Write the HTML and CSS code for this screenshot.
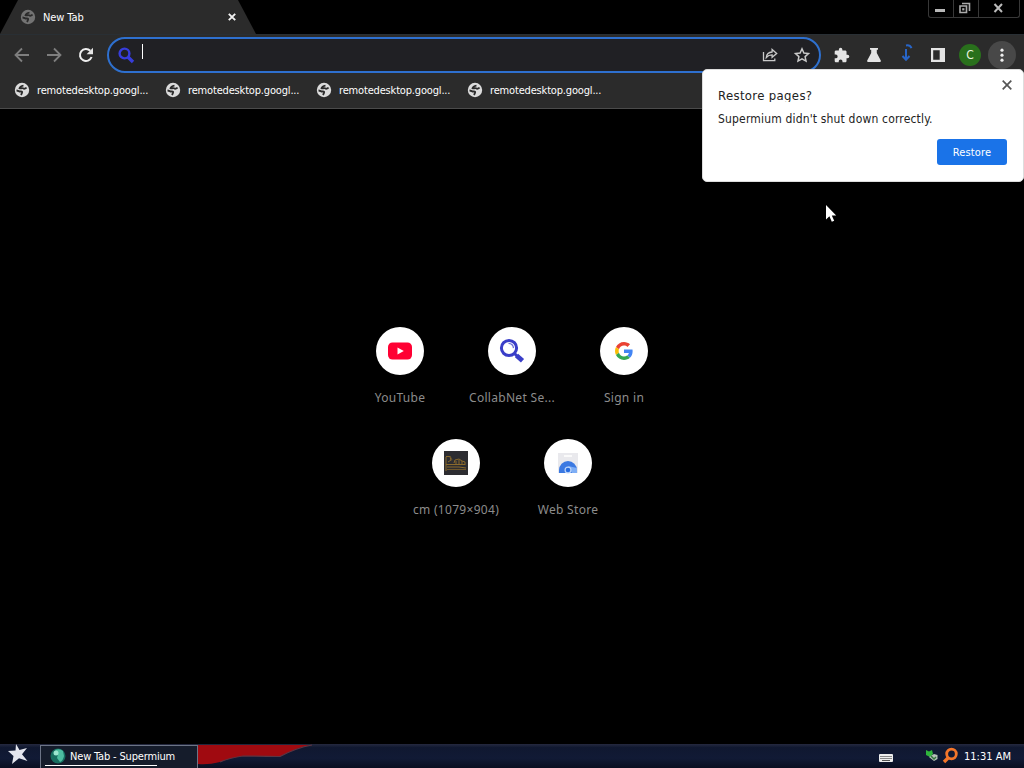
FILE: index.html
```html
<!DOCTYPE html>
<html lang="en">
<head>
    <meta charset="UTF-8">
    <meta name="viewport" content="width=device-width, initial-scale=1.0">
    <title>New Tab - Supermium</title>
    <link rel="stylesheet" href="styles.css">
</head>
<body>
    <!-- Shared globe icon -->
    <svg class="defs" width="0" height="0">
        <symbol id="globe" viewBox="0 0 16 16">
            <circle cx="8" cy="8" r="7.2" fill="currentColor"/>
            <path d="M2.5 8.5c2 0 2.5 1.2 4 1 1.5-.2 2 .3 1.5 1.5L7 13M12.500 5.500c-1 1.500-2.500 1.500-3.500.8-1-.7-2.500.5-3.500 0 .5-1.800 2-2.300 4-2.800" fill="none" stroke="#2b2b2b" stroke-width="1.8"/>
        </symbol>
    </svg>

    <div id="browser">
        <div id="tab-strip">
            <div class="tab">
                <svg class="globe dim"><use href="#globe"/></svg>
                <span class="tab-title">New Tab</span>
                <svg class="tab-close" viewBox="0 0 8 8"><path d="M.8.8l6.4 6.4M7.2.8L.8 7.2" stroke="#f2f2f2" stroke-width="1.9"/></svg>
            </div>
            <div class="window-buttons">
                <span class="win-min"><svg width="24" height="16"><path d="M6 9h10v3H6z" fill="#b8b8b8"/></svg></span>
                <span class="win-max"><svg width="24" height="16"><path d="M8 3.500h7.500V11M6 6h6.500v6.500H6z" fill="none" stroke="#aaa" stroke-width="1.6"/><path d="M8.200 8.200h2.200v2.200H8.200z" fill="#aaa"/></svg></span>
                <span class="win-close"><svg width="41" height="16"><path d="M15.500 4l7.500 8M23 4l-7.500 8" stroke="#bbb" stroke-width="2"/></svg></span>
            </div>
        </div>

        <div id="toolbar">
            <div class="tool"><svg viewBox="0 0 16 16" class="nav off"><path d="M15 8H2M8 1.5L1.500 8 8 14.500"/></svg></div>
            <div class="tool"><svg viewBox="0 0 16 16" class="nav off"><path d="M1 8h13M8 1.5L14.500 8 8 14.500"/></svg></div>
            <div class="tool"><svg viewBox="0 0 16 16" class="nav"><path d="M13.6 10A6 6 0 1 1 12.300 3.800"/><path d="M15 .8v6.400H8.600z" class="solid"/></svg></div>
            <div id="omnibox">
                <svg class="search" viewBox="0 0 16 16"><circle cx="6.500" cy="6.500" r="4.900" fill="none" stroke="#373ddb" stroke-width="2.4"/><path d="M10 10l5 5" stroke="#373ddb" stroke-width="3.4"/></svg>
                <span class="caret"></span>
                <div class="omnibox-actions">
                    <svg viewBox="0 0 16 16"><path d="M1.500 5v8.700h11.300V11.500"/><path d="M4.300 10.500c.4-3.600 2.400-5.300 5.800-5.500V2.500L14.700 6.400l-4.600 3.900V7.900c-2.500 0-4.300.8-5.800 2.600z"/></svg>
                    <svg viewBox="0 0 16 16"><path d="M8 1.800l1.900 4.200 4.600.5-3.400 3.100.9 4.500L8 11.800l-4 2.300.9-4.500L1.500 6.500 6.100 6z" stroke-width="1.5"/></svg>
                </div>
            </div>
            <div class="tools-right">
                <div class="tool"><svg viewBox="1 0 23 23" class="fill"><path d="M20.500 11H19V7c0-1.100-.9-2-2-2h-4V3.500a2.500 2.500 0 0 0-5 0V5H4c-1.100 0-2 .9-2 2v3.800h1.500a2.700 2.700 0 0 1 0 5.400H2V20c0 1.100.9 2 2 2h3.800v-1.500a2.700 2.700 0 0 1 5.400 0V22H17c1.100 0 2-.9 2-2v-4h1.500a2.500 2.500 0 0 0 0-5z"/></svg></div>
                <div class="tool"><svg viewBox="0 0 16 16" class="fill"><path d="M4 1h8v1.700h-1.200V6l4 7.500q.5 1.300-.8 1.500H2q-1.300-.2-.8-1.500l4-7.500V2.700H4z"/></svg></div>
                <div class="tool"><svg viewBox="0 0 16 16" class="download"><path d="M8 2v10.500M4.500 9L8 12.800 11.500 9"/><path d="M8-1.500q4-.8 5.500 2.700"/></svg></div>
                <div class="tool"><svg viewBox="0 0 16 16" class="fill"><path fill-rule="evenodd" d="M1 1h14v14H1zM3.200 3.200v9.600h6.500V3.200z"/></svg></div>
                <div class="tool"><span class="avatar">C</span></div>
                <div class="tool"><span class="menu"><svg viewBox="0 0 16 16"><circle cx="8" cy="3.200" r="1.600"/><circle cx="8" cy="8.200" r="1.600"/><circle cx="8" cy="13.200" r="1.600"/></svg></span></div>
            </div>
        </div>

        <div id="bookmarks">
            <div class="bookmark"><svg class="globe"><use href="#globe"/></svg><span>remotedesktop.googl...</span></div>
            <div class="bookmark"><svg class="globe"><use href="#globe"/></svg><span>remotedesktop.googl...</span></div>
            <div class="bookmark"><svg class="globe"><use href="#globe"/></svg><span>remotedesktop.googl...</span></div>
            <div class="bookmark"><svg class="globe"><use href="#globe"/></svg><span>remotedesktop.googl...</span></div>
        </div>

        <div id="page">
            <div class="tile-row">
                <div class="tile">
                    <div class="tile-icon"><svg width="24" height="24" viewBox="0 0 24 24"><rect y="3.500" width="24" height="17" rx="4.500" fill="#ff0033"/><path d="M9.500 8.600v6.800l6.300-3.400z" fill="#fff"/></svg></div>
                    <span>YouTube</span>
                </div>
                <div class="tile">
                    <div class="tile-icon"><svg width="24" height="24" viewBox="0 0 24 24"><circle cx="9" cy="9" r="7.600" fill="none" stroke="#3a3ec8" stroke-width="3"/><path d="M8.500 4.300q4.700.2 5 4.800" fill="none" stroke="#6c70d8" stroke-width="1.3"/><path d="M14 14l4 4" stroke="#3a3ec8" stroke-width="3"/><path d="M16.500 16.500l6 5.200" stroke="#3a3ec8" stroke-width="4.8"/></svg></div>
                    <span>CollabNet Se...</span>
                </div>
                <div class="tile">
                    <div class="tile-icon"><svg width="18" height="18" viewBox="0 0 48 48"><path fill="#ea4335" d="M24 9.500c3.540 0 6.710 1.220 9.210 3.600l6.850-6.850C35.900 2.380 30.470 0 24 0 14.620 0 6.510 5.380 2.560 13.220l7.980 6.190C12.430 13.720 17.740 9.500 24 9.500z"/><path fill="#4285f4" d="M46.980 24.550c0-1.570-.15-3.090-.38-4.550H24v9.020h12.940c-.58 2.960-2.260 5.480-4.780 7.180l7.730 6c4.510-4.180 7.090-10.360 7.090-17.650z"/><path fill="#fbbc05" d="M10.530 28.590c-.48-1.450-.76-2.990-.76-4.590s.27-3.140.76-4.590l-7.980-6.190C.92 16.460 0 20.120 0 24s.92 7.540 2.560 10.780z"/><path fill="#34a853" d="M24 48c6.480 0 11.930-2.130 15.890-5.810l-7.730-6c-2.150 1.450-4.920 2.300-8.160 2.300-6.260 0-11.570-4.220-13.470-9.910l-7.980 6.190C6.510 42.620 14.620 48 24 48z"/></svg></div>
                    <span>Sign in</span>
                </div>
            </div>
            <div class="tile-row">
                <div class="tile">
                    <div class="tile-icon"><svg width="24" height="24" viewBox="0 0 24 24"><path fill="#2d2d31" d="M0 0h24v24H0z"/><path d="M2 20V6M2 5.500h4l1 4M4 11l3-2M10 12l1-3 4-1 3 2 3 1v3M12 10v3M15 9v4M18 10v3M2 13.500h19M3 16h12l7 1" fill="none" stroke="#8a6a2c"/><path d="M6 5l2 4M3 18.500h19" stroke="#6e562b"/></svg></div>
                    <span>cm (1079×904)</span>
                </div>
                <div class="tile">
                    <div class="tile-icon"><svg width="24" height="24" viewBox="0 0 24 24"><path fill="#e9e9ed" d="M2 2h20v20H2z"/><path d="M8 5h8" stroke="#fafafa" stroke-width="2"/><path fill="#3b79e2" d="M3 22v-3a9 9 0 0 1 18 0v3z"/><path fill="#7eaef5" d="M12 15l9 2v5h-5z"/><circle cx="12" cy="19" r="3.500" fill="#bcd5fb"/><circle cx="12" cy="19" r="2.300" fill="#266be0"/></svg></div>
                    <span>Web Store</span>
                </div>
            </div>
        </div>
    </div>

    <div id="taskbar">
        <div class="start"><svg viewBox="0 0 20 20"><path d="M8 0l3.500 6L19 4l-5 6.200L19.500 17 11 14.300 4 20l1.500-8L0 7l7.500-.5z" fill="#e4e6ee"/></svg></div>
        <div class="task">
            <svg viewBox="0 0 16 16"><circle cx="8" cy="8" r="7.500" fill="#176e61"/><path d="M5 2q5-2 8 1l1 5q-1 5-4 6l-3-4 1-4z" fill="#4dbda0"/><circle cx="6" cy="5" r="2.500" fill="#9be6d0"/></svg>
            <span>New Tab - Supermium</span>
        </div>
        <svg class="ribbon" viewBox="0 0 114 21"><path d="M0 1h112Q98 4 82 12.500 64 12 45 12q-14 2-23 6-12 3-22 2z" fill="#a00a10"/><path d="M22 18q9-4 23-6 19 0 37 .5Q98 4 114 1" fill="none" stroke="#5d3543" stroke-width="1.2"/></svg>
        <div class="tray">
            <svg class="keyboard" viewBox="0 0 14 8"><rect width="14" height="8" rx="1" fill="#eee"/><path d="M1.500 2.500h11M1.500 4.500h11" stroke="#222" stroke-dasharray="1 1"/><path d="M3 6.500h8" stroke="#555"/></svg>
            <svg class="plug" viewBox="0 0 14 14"><path d="M1 1l3 1.500L7 1l1 4-3 3-4-2z" fill="#2fb53c"/><path d="M4 8l5 4 3.500-2V6L9 5z" fill="#b5c2b7"/><path d="M6 7l3 3 2-2" fill="none" stroke="#35723d" stroke-width="1.5"/></svg>
            <svg class="finder" viewBox="0 0 16 16"><circle cx="9.500" cy="6" r="4.800" fill="none" stroke="#f4762a" stroke-width="2.8"/><path d="M6.500 9.500L2 14" stroke="#f4762a" stroke-width="3.4"/></svg>
            <span class="clock">11:31 AM</span>
        </div>
    </div>

    <!-- Session restore bubble -->
    <div id="restore-bubble">
        <svg class="bubble-close" viewBox="0 0 10 10"><path d="M.7.7l8.600 8.600M9.300.7L.7 9.300" stroke="#555" stroke-width="1.7"/></svg>
        <h2>Restore pages?</h2>
        <p>Supermium didn't shut down correctly.</p>
        <button>Restore</button>
    </div>

    <svg id="cursor" viewBox="0 0 12 19"><path d="M1 0v14.500l3.400-3.200 2.400 5.400 2.400-1-2.400-5.300h4.400z" fill="#fff"/></svg>
</body>
</html>
```
FILE: styles.css
```css
* {
    margin: 0;
    padding: 0;
    box-sizing: border-box;
}
body {
    position: relative;
    display: flex;
    flex-direction: column;
    width: 1024px;
    height: 768px;
    overflow: hidden;
    background-color: #000;
    color: #fff;
    font-family: Tahoma, 'DejaVu Sans Condensed', 'DejaVu Sans', sans-serif;
    font-size: 11px;
    white-space: nowrap;
}
svg {
    display: block;
    flex-shrink: 0;
    overflow: visible;
}
.defs {
    position: absolute;
}
#browser {
    flex: 1;
    display: flex;
    flex-direction: column;
}

/* Tab strip */
#tab-strip {
    display: flex;
    justify-content: space-between;
    align-items: flex-start;
    height: 34px;
    padding-right: 4px;
}
.tab {
    display: flex;
    align-items: center;
    width: 256px;
    height: 34px;
    padding: 0 20px;
    background-color: #2b2b2b;
    clip-path: polygon(18px 0, 238px 0, 256px 100%, 0 100%);
}
.globe {
    width: 16px;
    height: 16px;
    color: #dcdcdc;
}
.globe.dim {
    color: #737373;
}
.tab-title {
    margin-left: 7px;
    letter-spacing: -0.1px;
}
.tab-close {
    width: 8px;
    height: 8px;
    margin-left: auto;
}
.window-buttons {
    display: flex;
    width: 92px;
    height: 18px;
    border: 1px solid #383838;
    border-top: none;
    border-radius: 0 0 3px 3px;
}
.win-min, .win-max {
    width: 25px;
    border-right: 1px solid #383838;
}

/* Toolbar */
#toolbar {
    display: flex;
    align-items: center;
    height: 40px;
    padding: 0 6px;
    background-color: #2b2b2b;
    border-top: 1px solid #292f34;
}
.tool {
    display: flex;
    justify-content: center;
    align-items: center;
    width: 32px;
    height: 32px;
}
.tool svg {
    width: 16px;
    height: 16px;
}
.nav {
    fill: none;
    stroke: #eee;
    stroke-width: 2;
}
.nav.off {
    stroke: #7e7e7e;
    stroke-width: 1.8;
}
.nav .solid, .fill {
    fill: #e4e4e4;
    stroke: none;
}
.tool .download {
    fill: none;
    stroke: #2865c7;
    stroke-width: 2;
}
#omnibox {
    display: flex;
    align-items: center;
    width: 714px;
    height: 36px;
    margin-left: 5px;
    padding: 0 9px;
    background-color: #202024;
    border: 2px solid #2e70cf;
    border-radius: 18px;
}
.search {
    width: 16px;
    height: 16px;
}
.caret {
    width: 1px;
    height: 15px;
    margin: 0 0 7px 8px;
    background-color: #fff;
}
.omnibox-actions {
    display: flex;
    gap: 16px;
    margin-left: auto;
}
.omnibox-actions svg {
    width: 16px;
    height: 16px;
    fill: none;
    stroke: #c9c9c9;
    stroke-width: 1.3;
}
.tools-right {
    display: flex;
    margin-left: 5px;
}
.avatar {
    width: 22px;
    height: 22px;
    border-radius: 50%;
    background-color: #29701c;
    color: #e7f3df;
    font-size: 12px;
    line-height: 22px;
    text-align: center;
}
.menu {
    display: flex;
    justify-content: center;
    align-items: center;
    width: 28px;
    height: 28px;
    border-radius: 50%;
    background-color: #484848;
    fill: #eee;
}

/* Bookmarks */
#bookmarks {
    display: flex;
    align-items: center;
    height: 35px;
    padding: 0 14px 2px;
    background-color: #2b2b2b;
    border-bottom: 1px solid #4b4b4b;
}
.bookmark {
    display: flex;
    align-items: center;
    gap: 7px;
    width: 151px;
    letter-spacing: -0.17px;
}

/* Shortcuts on the new tab page */
#page {
    flex: 1;
    padding-top: 218px;
}
.tile-row {
    display: flex;
    justify-content: center;
    height: 112px;
}
.tile {
    display: flex;
    flex-direction: column;
    align-items: center;
    width: 112px;
    color: #8c8c8c;
    font-family: 'Noto Sans', 'Open Sans', sans-serif;
    font-size: 12px;
    letter-spacing: 0.3px;
    line-height: 18px;
}
.tile-icon {
    display: flex;
    justify-content: center;
    align-items: center;
    width: 48px;
    height: 48px;
    margin-bottom: 14px;
    border-radius: 50%;
    background-color: #fff;
}

/* Restore bubble */
#restore-bubble {
    position: absolute;
    top: 69px;
    left: 702px;
    display: flex;
    flex-direction: column;
    width: 322px;
    height: 113px;
    padding: 18px 16px 0 15px;
    background-color: #fff;
    border: 1px solid #ddd;
    border-radius: 5px;
    color: #222;
}
#restore-bubble h2 {
    height: 14px;
    overflow: hidden;
    font-size: 13px;
    font-weight: normal;
    letter-spacing: 0.35px;
    line-height: 16px;
}
#restore-bubble p {
    height: 13px;
    margin-top: 9px;
    font-size: 12px;
    letter-spacing: 0.17px;
    line-height: 16px;
}
#restore-bubble button {
    align-self: flex-end;
    width: 70px;
    height: 26px;
    margin-top: 15px;
    border: none;
    border-radius: 3px;
    background-color: #1a73e8;
    color: #fff;
    font-family: inherit;
    font-size: 11px;
    letter-spacing: 0.15px;
}
.bubble-close {
    position: absolute;
    top: 10px;
    right: 11px;
    width: 10px;
    height: 10px;
}
#cursor {
    position: absolute;
    top: 205px;
    left: 825px;
    width: 12px;
    height: 19px;
}

/* Taskbar */
#taskbar {
    display: flex;
    height: 24px;
    background: linear-gradient(#25293f, #101830 15%, #111a35 60%, #090e20);
}
.start {
    width: 40px;
    padding-left: 8px;
}
.start svg {
    width: 20px;
    height: 20px;
}
.task {
    display: flex;
    align-items: center;
    gap: 4px;
    width: 158px;
    margin-top: 1px;
    padding: 0 0 2px 9px;
    background: linear-gradient(90deg, #fff, #fff) 4px 19px / 112px 1px no-repeat, #151c2b;
    border: 1px solid #6c7485;
    border-bottom: none;
    letter-spacing: -0.17px;
}
.task svg {
    width: 16px;
    height: 16px;
}
.ribbon {
    width: 114px;
    height: 21px;
}
.tray {
    display: flex;
    align-items: center;
    margin-left: auto;
    padding-right: 13px;
}
.keyboard {
    width: 14px;
    height: 8px;
    margin: 4px 32px 0 0;
}
.plug {
    width: 14px;
    height: 14px;
    margin-right: 3px;
}
.finder {
    width: 16px;
    height: 16px;
    margin-right: 6px;
}
```
